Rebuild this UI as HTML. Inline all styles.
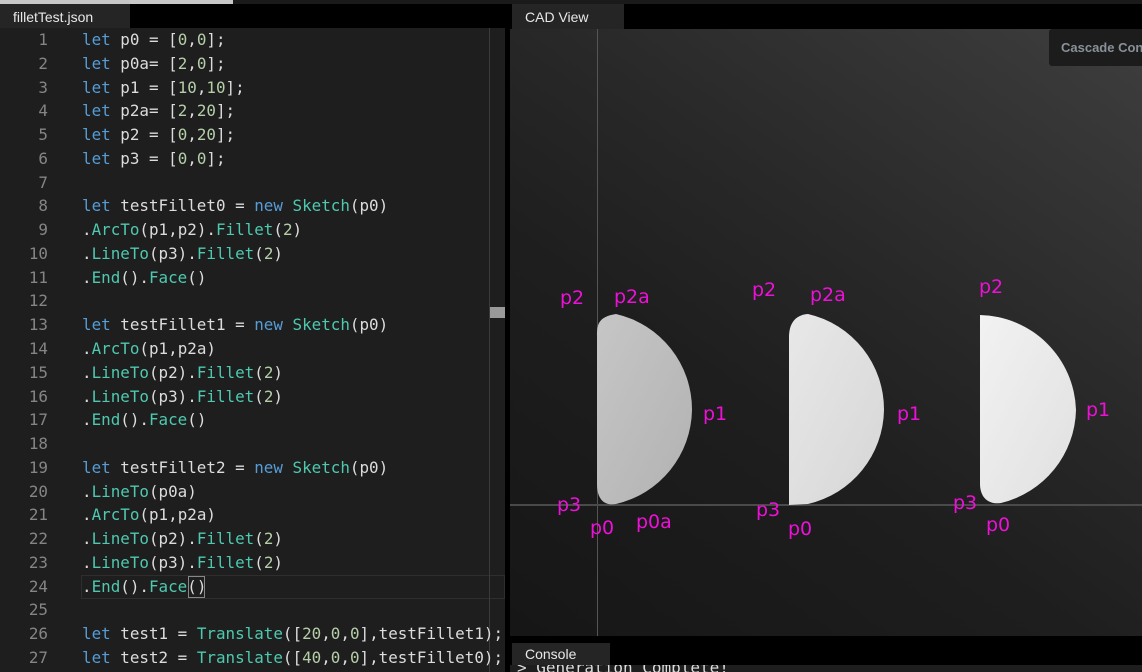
<!DOCTYPE html>
<html><head><meta charset="utf-8"><style>
*{margin:0;padding:0;box-sizing:border-box}
body{width:1142px;height:672px;overflow:hidden;background:#000;position:relative;font-family:"Liberation Sans",sans-serif}
.abs{position:absolute}
#code{position:absolute;left:0;top:28px;width:505px;height:644px;background:#1e1e1e;overflow:hidden}
.ln{position:absolute;left:0;width:48px;text-align:right;color:#858585}
.row{position:absolute;left:82px;white-space:pre;color:#dcdcdc}
.row,.ln{font-family:"DejaVu Sans Mono","Liberation Mono",monospace;font-size:15.9px;height:23.77px;line-height:23.77px}
.k{color:#569cd6}.n{color:#b5cea8}.f{color:#4ec9b0}.p{color:#d4d4d4}
.lab{position:absolute;color:#ee10d8;font-size:19px;font-family:"DejaVu Sans",sans-serif;line-height:1}
</style></head><body>
<div class="abs" style="left:0;top:0;width:1142px;height:4px;background:#1a1a1a"></div>
<div class="abs" style="left:0;top:0;width:233px;height:4px;background:#c8c8c8"></div>
<div class="abs" style="left:0;top:4px;width:130px;height:25px;background:#252526;color:#e8e8e8;font-size:14px;padding:5px 0 0 13px">filletTest.json</div>
<div class="abs" style="left:512px;top:4px;width:112px;height:25px;background:#252526;color:#e8e8e8;font-size:14px;padding:5px 0 0 13px">CAD View</div>
<div id="code">
<div class="abs" style="left:81px;top:547px;width:424px;height:24px;border:1px solid #2e2e2e"></div>
<div class="abs" style="left:188px;top:548px;width:17px;height:22px;border:1px solid #888"></div>
<div class="abs" style="left:489px;top:0;width:1px;height:644px;background:#3a3a3a"></div>
<div class="abs" style="left:490px;top:279px;width:15px;height:11px;background:#999"></div>
<div id="rows"></div>
</div>
<div class="abs" style="left:510px;top:29px;width:632px;height:607px;background:linear-gradient(215deg,#3e3e3e 0%,#333 20%,#282828 40%,#1e1e1e 62%,#161616 100%);overflow:hidden">
<div class="abs" style="left:87px;top:0;width:1px;height:607px;background:#555"></div>
<div class="abs" style="left:0;top:475px;width:632px;height:2px;background:#4a4a4a"></div>
<svg class="abs" style="left:0;top:0" width="632" height="607">
<defs>
<linearGradient id="g1" x1="0" y1="0" x2="1" y2="1"><stop offset="0" stop-color="#c6c6c6"/><stop offset="1" stop-color="#b2b2b2"/></linearGradient>
<linearGradient id="g2" x1="0" y1="0" x2="1" y2="1"><stop offset="0" stop-color="#e8e8e8"/><stop offset="1" stop-color="#d6d6d6"/></linearGradient>
<linearGradient id="g3" x1="0" y1="0" x2="1" y2="1"><stop offset="0" stop-color="#f2f2f2"/><stop offset="1" stop-color="#e0e0e0"/></linearGradient>
</defs>
<path d="M106,285 C86,288 87,298 87,310 L87,455 C87,472 96,477 106,475 A98 98 0 0 0 182,381 A98 98 0 0 0 106,285 Z" fill="url(#g1)"/>
<path d="M298,285 C284,286 279,296 279,308 L279,476 L298,475 A98 98 0 0 0 374,381 A98 98 0 0 0 298,285 Z" fill="url(#g2)"/>
<path d="M470,286 L470,455 C470,468 478,476 491,474 A98 98 0 0 0 566,381 A98 98 0 0 0 470,286 Z" fill="url(#g3)"/>
</svg>
</div>
<div class="abs" style="left:1049px;top:29px;width:100px;height:37px;background:#1c1c1c;border-radius:3px;color:#8a9098;font-weight:bold;font-size:13px;padding:11px 0 0 12px;white-space:nowrap">Cascade Control</div>
<div class="lab" style="left:560px;top:289px">p2</div>
<div class="lab" style="left:614px;top:288px">p2a</div>
<div class="lab" style="left:703px;top:405px">p1</div>
<div class="lab" style="left:557px;top:496px">p3</div>
<div class="lab" style="left:590px;top:519px">p0</div>
<div class="lab" style="left:636px;top:513px">p0a</div>
<div class="lab" style="left:752px;top:281px">p2</div>
<div class="lab" style="left:810px;top:286px">p2a</div>
<div class="lab" style="left:897px;top:405px">p1</div>
<div class="lab" style="left:756px;top:501px">p3</div>
<div class="lab" style="left:788px;top:520px">p0</div>
<div class="lab" style="left:979px;top:278px">p2</div>
<div class="lab" style="left:1086px;top:401px">p1</div>
<div class="lab" style="left:953px;top:494px">p3</div>
<div class="lab" style="left:986px;top:516px">p0</div>
<div class="abs" style="left:510px;top:665px;width:632px;height:7px;background:#1e1e1e;overflow:hidden"><div style="position:absolute;left:7px;top:-7px;color:#ddd;font-family:'DejaVu Sans Mono',monospace;font-size:16px;white-space:pre">&gt; Generation Complete!</div></div>
<div class="abs" style="left:512px;top:643px;width:98px;height:22px;background:#252526;color:#e8e8e8;font-size:14px;padding:3px 0 0 13px">Console</div>
<script>
var L=[
'<span class="k">let</span> p0 = [<span class="n">0</span>,<span class="n">0</span>];',
'<span class="k">let</span> p0a= [<span class="n">2</span>,<span class="n">0</span>];',
'<span class="k">let</span> p1 = [<span class="n">10</span>,<span class="n">10</span>];',
'<span class="k">let</span> p2a= [<span class="n">2</span>,<span class="n">20</span>];',
'<span class="k">let</span> p2 = [<span class="n">0</span>,<span class="n">20</span>];',
'<span class="k">let</span> p3 = [<span class="n">0</span>,<span class="n">0</span>];',
'',
'<span class="k">let</span> testFillet0 = <span class="k">new</span> <span class="f">Sketch</span>(p0)',
'.<span class="f">ArcTo</span>(p1,p2).<span class="f">Fillet</span>(<span class="n">2</span>)',
'.<span class="f">LineTo</span>(p3).<span class="f">Fillet</span>(<span class="n">2</span>)',
'.<span class="f">End</span>().<span class="f">Face</span>()',
'',
'<span class="k">let</span> testFillet1 = <span class="k">new</span> <span class="f">Sketch</span>(p0)',
'.<span class="f">ArcTo</span>(p1,p2a)',
'.<span class="f">LineTo</span>(p2).<span class="f">Fillet</span>(<span class="n">2</span>)',
'.<span class="f">LineTo</span>(p3).<span class="f">Fillet</span>(<span class="n">2</span>)',
'.<span class="f">End</span>().<span class="f">Face</span>()',
'',
'<span class="k">let</span> testFillet2 = <span class="k">new</span> <span class="f">Sketch</span>(p0)',
'.<span class="f">LineTo</span>(p0a)',
'.<span class="f">ArcTo</span>(p1,p2a)',
'.<span class="f">LineTo</span>(p2).<span class="f">Fillet</span>(<span class="n">2</span>)',
'.<span class="f">LineTo</span>(p3).<span class="f">Fillet</span>(<span class="n">2</span>)',
'.<span class="f">End</span>().<span class="f">Face</span>()',
'',
'<span class="k">let</span> test1 = <span class="f">Translate</span>([<span class="n">20</span>,<span class="n">0</span>,<span class="n">0</span>],testFillet1);',
'<span class="k">let</span> test2 = <span class="f">Translate</span>([<span class="n">40</span>,<span class="n">0</span>,<span class="n">0</span>],testFillet0);'
];
var h='';for(var i=0;i<L.length;i++){var t=(i*23.77).toFixed(2);h+='<div class="ln" style="top:'+t+'px">'+(i+1)+'</div><div class="row" style="top:'+t+'px">'+L[i]+'</div>';}
document.getElementById('rows').innerHTML=h;
</script>
</body></html>
